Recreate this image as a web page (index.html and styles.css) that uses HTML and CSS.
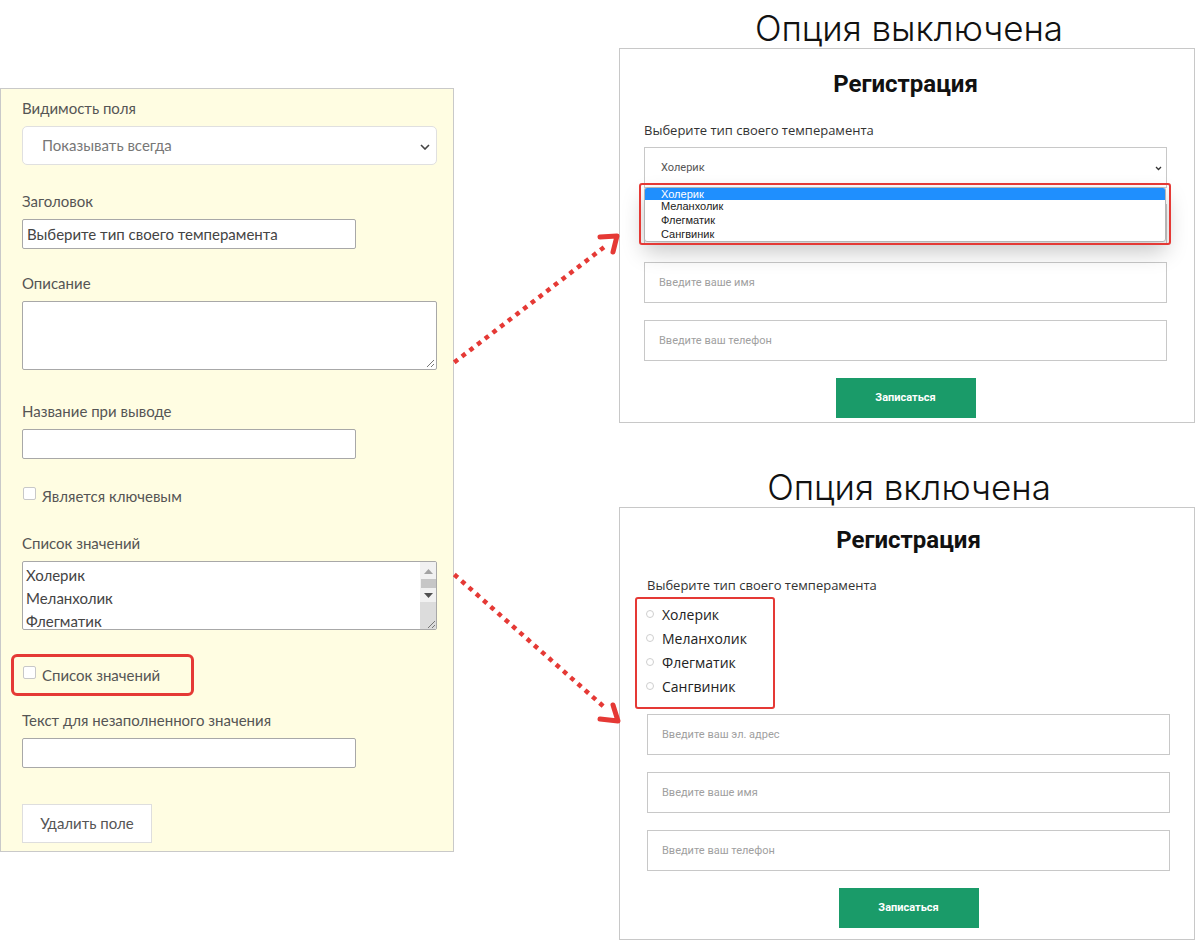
FILE: index.html
```html
<!DOCTYPE html>
<html lang="ru">
<head>
  <meta charset="UTF-8">
  <title>Список значений</title>
  <link rel="stylesheet" href="styles.css">
</head>
<body>
  <div class="page">
    <div class="editor">
      <div class="field">
        <div class="field-label">Видимость поля</div>
        <div class="select">
          Показывать всегда
          <svg class="chevron" width="10" height="6" viewBox="0 0 10 6"><path d="M1 1l4 4 4-4" fill="none" stroke="#444" stroke-width="1.6"/></svg>
        </div>
      </div>
      <div class="field gap-26">
        <div class="field-label">Заголовок</div>
        <div class="input">Выберите тип своего темперамента</div>
      </div>
      <div class="field gap-24">
        <div class="field-label">Описание</div>
        <div class="textarea">
          <svg class="grip" width="10" height="10" viewBox="0 0 10 10"><path d="M9 2L2 9M9 6L6 9" stroke="#777" stroke-width="1"/></svg>
        </div>
      </div>
      <div class="field gap-31">
        <div class="field-label">Название при выводе</div>
        <div class="input"></div>
      </div>
      <div class="check gap-27">
        <span class="checkbox"></span>Является ключевым
      </div>
      <div class="field gap-27">
        <div class="field-label">Список значений</div>
        <div class="textarea listbox">
          <div class="list-lines">
            <div>Холерик</div>
            <div>Меланхолик</div>
            <div>Флегматик</div>
          </div>
          <div class="scrollbar">
            <svg class="scroll-up" width="9" height="5" viewBox="0 0 9 5"><path d="M0 5L4.5 0 9 5z" fill="#a3a3a3"/></svg>
            <div class="scroll-thumb"></div>
            <svg class="scroll-down" width="9" height="5" viewBox="0 0 9 5"><path d="M0 0L4.5 5 9 0z" fill="#505050"/></svg>
            <div class="scroll-corner">
              <svg width="10" height="10" viewBox="0 0 10 10"><path d="M9 2L2 9M9 6L6 9" stroke="#777" stroke-width="1"/></svg>
            </div>
          </div>
        </div>
      </div>
      <div class="check-mark gap-24">
        <div class="check">
          <span class="checkbox"></span>Список значений
        </div>
      </div>
      <div class="field gap-14">
        <div class="field-label">Текст для незаполненного значения</div>
        <div class="input"></div>
      </div>
      <div class="remove-btn">Удалить поле</div>
    </div>

    <div class="previews">
      <div class="caption">Опция выключена</div>
      <div class="card card-off">
        <div class="card-title">Регистрация</div>
        <div class="card-label">Выберите тип своего темперамента</div>
        <div class="card-select-wrap">
          <div class="card-select">
            Холерик
            <svg class="card-chevron" width="7" height="5" viewBox="0 0 7 5"><path d="M1 1l2.5 2.5L6 1" fill="none" stroke="#333" stroke-width="1.3"/></svg>
          </div>
          <div class="dropdown">
            <div class="dropdown-item selected">Холерик</div>
            <div class="dropdown-item">Меланхолик</div>
            <div class="dropdown-item">Флегматик</div>
            <div class="dropdown-item">Сангвиник</div>
          </div>
          <div class="dropdown-mark"></div>
        </div>
        <!-- email field sits under the open list -->
        <div class="card-input first"></div>
        <div class="card-input">Введите ваше имя</div>
        <div class="card-input">Введите ваш телефон</div>
        <div class="card-submit">Записаться</div>
      </div>

      <div class="caption caption-on">Опция включена</div>
      <div class="card card-on">
        <div class="card-title">Регистрация</div>
        <div class="card-label">Выберите тип своего темперамента</div>
        <div class="radio-mark">
          <div class="radio-row"><span class="radio"></span>Холерик</div>
          <div class="radio-row"><span class="radio"></span>Меланхолик</div>
          <div class="radio-row"><span class="radio"></span>Флегматик</div>
          <div class="radio-row"><span class="radio"></span>Сангвиник</div>
        </div>
        <div class="card-input first">Введите ваш эл. адрес</div>
        <div class="card-input">Введите ваше имя</div>
        <div class="card-input">Введите ваш телефон</div>
        <div class="card-submit">Записаться</div>
      </div>
    </div>

    <svg class="arrows" width="1199" height="940" viewBox="0 0 1199 940">
      <g fill="none" stroke="#e53935">
        <path d="M456 361L603 248" stroke-width="4.5" stroke-dasharray="0.1 9.6" stroke-linecap="square"/>
        <path d="M600 237L617 236L613 252" stroke-width="5" stroke-linecap="round" stroke-linejoin="round"/>
        <path d="M456 576L603 706" stroke-width="4.5" stroke-dasharray="0.1 9.6" stroke-linecap="square"/>
        <path d="M600 719L618 721L613 705" stroke-width="5" stroke-linecap="round" stroke-linejoin="round"/>
      </g>
    </svg>
  </div>
</body>
</html>
```

FILE: styles.css
```css
body {
  margin: 0;
  background: #fff;
  font-family: Lato, "Open Sans", sans-serif;
}
.page {
  position: relative;
  display: flex;
  align-items: flex-start;
  width: 1199px;
  height: 940px;
  overflow: hidden;
}

/* left: field editor */
.editor {
  box-sizing: border-box;
  width: 454px;
  height: 764px;
  margin-top: 88px;
  padding: 9px 16px 0 21px;
  background: #fffde2;
  border: 1px solid #c9c9c9;
  color: #555;
  font-size: 15px;
}
.field-label {
  line-height: 20px;
  margin-bottom: 8px;
}
.gap-14 { margin-top: 14px; }
.gap-24 { margin-top: 24px; }
.gap-26 { margin-top: 26px; }
.gap-27 { margin-top: 27px; }
.gap-31 { margin-top: 31px; }
.select {
  position: relative;
  box-sizing: border-box;
  height: 39px;
  padding-left: 19px;
  line-height: 37px;
  background: #fff;
  border: 1px solid #e0e0e0;
  border-radius: 5px;
  color: #777;
}
.chevron {
  position: absolute;
  right: 6px;
  top: 17px;
}
.input {
  box-sizing: border-box;
  width: 334px;
  height: 30px;
  padding-left: 4px;
  line-height: 28px;
  background: #fff;
  border: 1px solid #a8a8a8;
  border-radius: 2px;
  color: #444;
}
.textarea {
  position: relative;
  box-sizing: border-box;
  height: 69px;
  background: #fff;
  border: 1px solid #a8a8a8;
  border-radius: 2px;
  overflow: hidden;
}
.grip {
  position: absolute;
  right: 1px;
  bottom: 1px;
}
.listbox {
  display: flex;
}
.list-lines {
  flex: 1;
  height: 67px;
  overflow: hidden;
  padding: 2px 0 0 3px;
  box-sizing: border-box;
  line-height: 23px;
  color: #444;
}
.scrollbar {
  display: flex;
  flex-direction: column;
  align-items: center;
  width: 16px;
  background: #f1f1f1;
}
.scroll-up { margin-top: 7px; }
.scroll-thumb {
  width: 15px;
  height: 9px;
  margin-top: 5px;
  background: #c6c6c6;
}
.scroll-down { margin-top: 5px; }
.scroll-corner {
  display: flex;
  align-items: flex-end;
  justify-content: flex-end;
  width: 16px;
  flex: 1;
  margin-top: 4px;
  background: #dcdcdc;
}
.check {
  display: flex;
  align-items: center;
  line-height: 20px;
}
.checkbox {
  box-sizing: border-box;
  width: 13px;
  height: 13px;
  margin: 0 6px 0 1px;
  background: #fff;
  border: 1px solid #c8c8c8;
  border-radius: 2px;
  position: relative;
  top: -3px;
}
.check-mark {
  box-sizing: border-box;
  width: 183px;
  height: 42px;
  margin-left: -11px;
  padding: 8px 0 0 8px;
  border: 3px solid #e53935;
  border-radius: 6px;
}
.remove-btn {
  display: inline-block;
  box-sizing: border-box;
  margin-top: 36px;
  width: 130px;
  height: 39px;
  line-height: 37px;
  text-align: center;
  background: #fff;
  border: 1px solid #dedede;
  color: #555;
}

/* right: preview cards */
.previews {
  width: 576px;
  margin-left: 165px;
}
.caption {
  height: 48px;
  line-height: 56px;
  text-align: center;
  font-family: Inter, sans-serif;
  font-weight: 300;
  font-size: 35px;
  color: #111;
  padding-left: 4px;
}
.caption-on {
  margin-top: 36px;
}
.card {
  box-sizing: border-box;
  padding: 21px 27px 4px 24px;
  border: 1px solid #c8c8c8;
  background: #fff;
}
.card-on {
  padding: 18px 24px 11px 27px;
}
.card-title {
  line-height: 28px;
  text-align: center;
  font-family: Roboto, sans-serif;
  font-weight: 700;
  font-size: 24px;
  color: #111;
}
.card-label {
  margin-top: 23px;
  line-height: 18px;
  font-family: "Open Sans", sans-serif;
  font-size: 13px;
  color: #333;
}
.card-on .card-label {
  margin-top: 22px;
}
.card-select-wrap {
  position: relative;
  margin-top: 8px;
}
.card-select {
  position: relative;
  box-sizing: border-box;
  height: 41px;
  padding-left: 16px;
  line-height: 39px;
  border: 1px solid #c8c8c8;
  font-family: Roboto, sans-serif;
  font-size: 11px;
  color: #555;
}
.card-chevron {
  position: absolute;
  right: 4px;
  top: 18px;
}
.dropdown {
  position: absolute;
  top: 40px;
  left: 0;
  right: 1px;
  z-index: 2;
  box-sizing: border-box;
  height: 55px;
  background: #fff;
  border: 1px solid #b5b5b5;
  border-radius: 3px;
  box-shadow: 0 10px 22px rgba(0, 0, 0, 0.22);
  overflow: hidden;
  font-family: "Liberation Sans", Arial, sans-serif;
  font-size: 11px;
  color: #222;
}
.dropdown-item {
  height: 14px;
  line-height: 13px;
  padding-left: 16px;
}
.dropdown-item.selected {
  height: 12px;
  line-height: 12px;
  background: #1f8ffe;
  color: #fff;
}
.dropdown-mark {
  position: absolute;
  top: 36px;
  left: -5px;
  right: -4px;
  height: 62px;
  z-index: 3;
  box-sizing: border-box;
  border: 2px solid #e53935;
  border-radius: 3px;
}
.card-input {
  box-sizing: border-box;
  height: 41px;
  margin-top: 17px;
  padding-left: 14px;
  line-height: 39px;
  border: 1px solid #c8c8c8;
  font-family: Roboto, sans-serif;
  font-size: 11px;
  color: #a0a0a0;
}
.card-input.first {
  margin-top: 16px;
}
.card-on .card-input.first {
  margin-top: 5px;
}
.card-submit {
  width: 140px;
  height: 40px;
  margin: 17px auto 0;
  line-height: 40px;
  text-align: center;
  background: #1a9b69;
  font-family: Roboto, sans-serif;
  font-weight: 700;
  font-size: 11px;
  color: #fff;
}
.radio-mark {
  box-sizing: border-box;
  width: 140px;
  margin: 3px 0 0 -12px;
  padding: 3px 0 9px 9px;
  border: 2px solid #e53935;
  border-radius: 3px;
}
.radio-row {
  display: flex;
  align-items: center;
  height: 24px;
  font-family: "Open Sans", sans-serif;
  font-size: 14px;
  color: #222;
}
.radio {
  box-sizing: border-box;
  width: 8px;
  height: 8px;
  margin-right: 8px;
  border: 1px solid #cfcfcf;
  border-radius: 50%;
}

.arrows {
  position: absolute;
  left: 0;
  top: 0;
  pointer-events: none;
}
```
